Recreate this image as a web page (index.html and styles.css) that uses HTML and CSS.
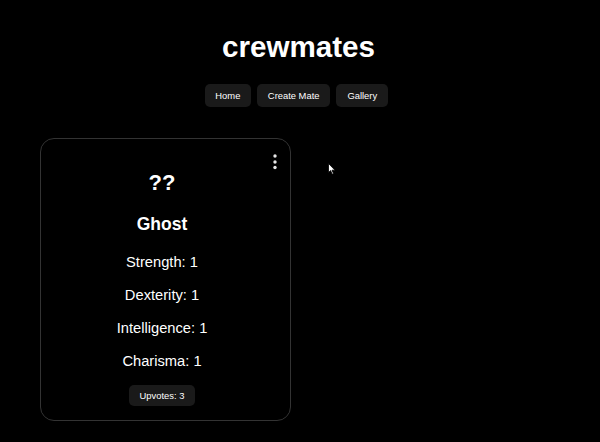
FILE: index.html
```html
<!DOCTYPE html>
<html lang="en">
<head>
<meta charset="utf-8">
<title>crewmates</title>
<link rel="stylesheet" href="styles.css">
</head>
<body>
<header class="header">
  <h1 class="title">crewmates</h1>
  <nav class="nav">
    <button class="nav-btn">Home</button>
    <button class="nav-btn">Create Mate</button>
    <button class="nav-btn">Gallery</button>
  </nav>
</header>
<main class="gallery">
  <div class="card">
    <svg class="kebab" width="6" height="18" viewBox="0 0 6 18" aria-hidden="true">
      <circle cx="3" cy="3" r="1.7" fill="#e6e6e6"/>
      <circle cx="3" cy="9" r="1.7" fill="#e6e6e6"/>
      <circle cx="3" cy="14.5" r="1.7" fill="#e6e6e6"/>
    </svg>
    <h2 class="mate-icon">??</h2>
    <h3 class="mate-name">Ghost</h3>
    <p class="stat">Strength: 1</p>
    <p class="stat">Dexterity: 1</p>
    <p class="stat">Intelligence: 1</p>
    <p class="stat">Charisma: 1</p>
    <button class="upvote-btn">Upvotes: 3</button>
  </div>
</main>
<svg class="cursor" width="8" height="12" viewBox="0 0 8 12" aria-hidden="true">
  <path d="M0.5 0.5 L0.5 9.5 L2.6 7.6 L4.2 11.2 L5.5 10.6 L4 7.2 L7 7.2 Z" fill="#fff" stroke="#000" stroke-width="0.8"/>
</svg>
</body>
</html>
```

FILE: styles.css
```css
html, body {
  margin: 0;
  padding: 0;
  background: #000;
  color: #fff;
  font-family: "Liberation Sans", Arial, sans-serif;
}

body {
  position: relative;
  width: 600px;
  height: 442px;
  overflow: hidden;
}

.header {
  display: flex;
  flex-direction: column;
  align-items: center;
  padding-top: 30px;
  padding-right: 3px;
}

.title {
  margin: 0;
  font-size: 29.6px;
  line-height: 34px;
  font-weight: 700;
}

.nav {
  display: flex;
  gap: 6px;
  margin-top: 20px;
  padding-right: 4px;
}

.nav-btn, .upvote-btn {
  background: #1a1a1a;
  color: #fff;
  border: none;
  border-radius: 5px;
  font-family: "Liberation Sans", Arial, sans-serif;
  font-size: 9.4px;
  height: 23px;
  padding: 0 11px;
  cursor: pointer;
}

.nav-btn:first-child {
  padding: 0 10.5px;
}

.gallery {
  display: flex;
  padding: 31px 0 0 40px;
}

.card {
  position: relative;
  box-sizing: border-box;
  width: 251px;
  height: 283px;
  border: 1px solid #333;
  border-radius: 14px;
  display: flex;
  flex-direction: column;
  align-items: center;
  padding: 31px 7px 0 0;
}

.kebab {
  position: absolute;
  top: 14px;
  right: 12px;
}

.mate-icon {
  margin: 0;
  font-size: 22px;
  line-height: 25px;
  font-weight: 700;
}

.mate-name {
  margin: 19px 0 0;
  font-size: 17.5px;
  line-height: 20px;
  font-weight: 700;
}

.stat {
  margin: 0;
  font-size: 14.7px;
  line-height: 17px;
}

.mate-name + .stat {
  margin-top: 20px;
}

.stat + .stat {
  margin-top: 16px;
}

.upvote-btn {
  margin-top: 15px;
  height: 21px;
  padding: 0 11px;
}

.cursor {
  position: absolute;
  left: 328px;
  top: 163px;
}
```
